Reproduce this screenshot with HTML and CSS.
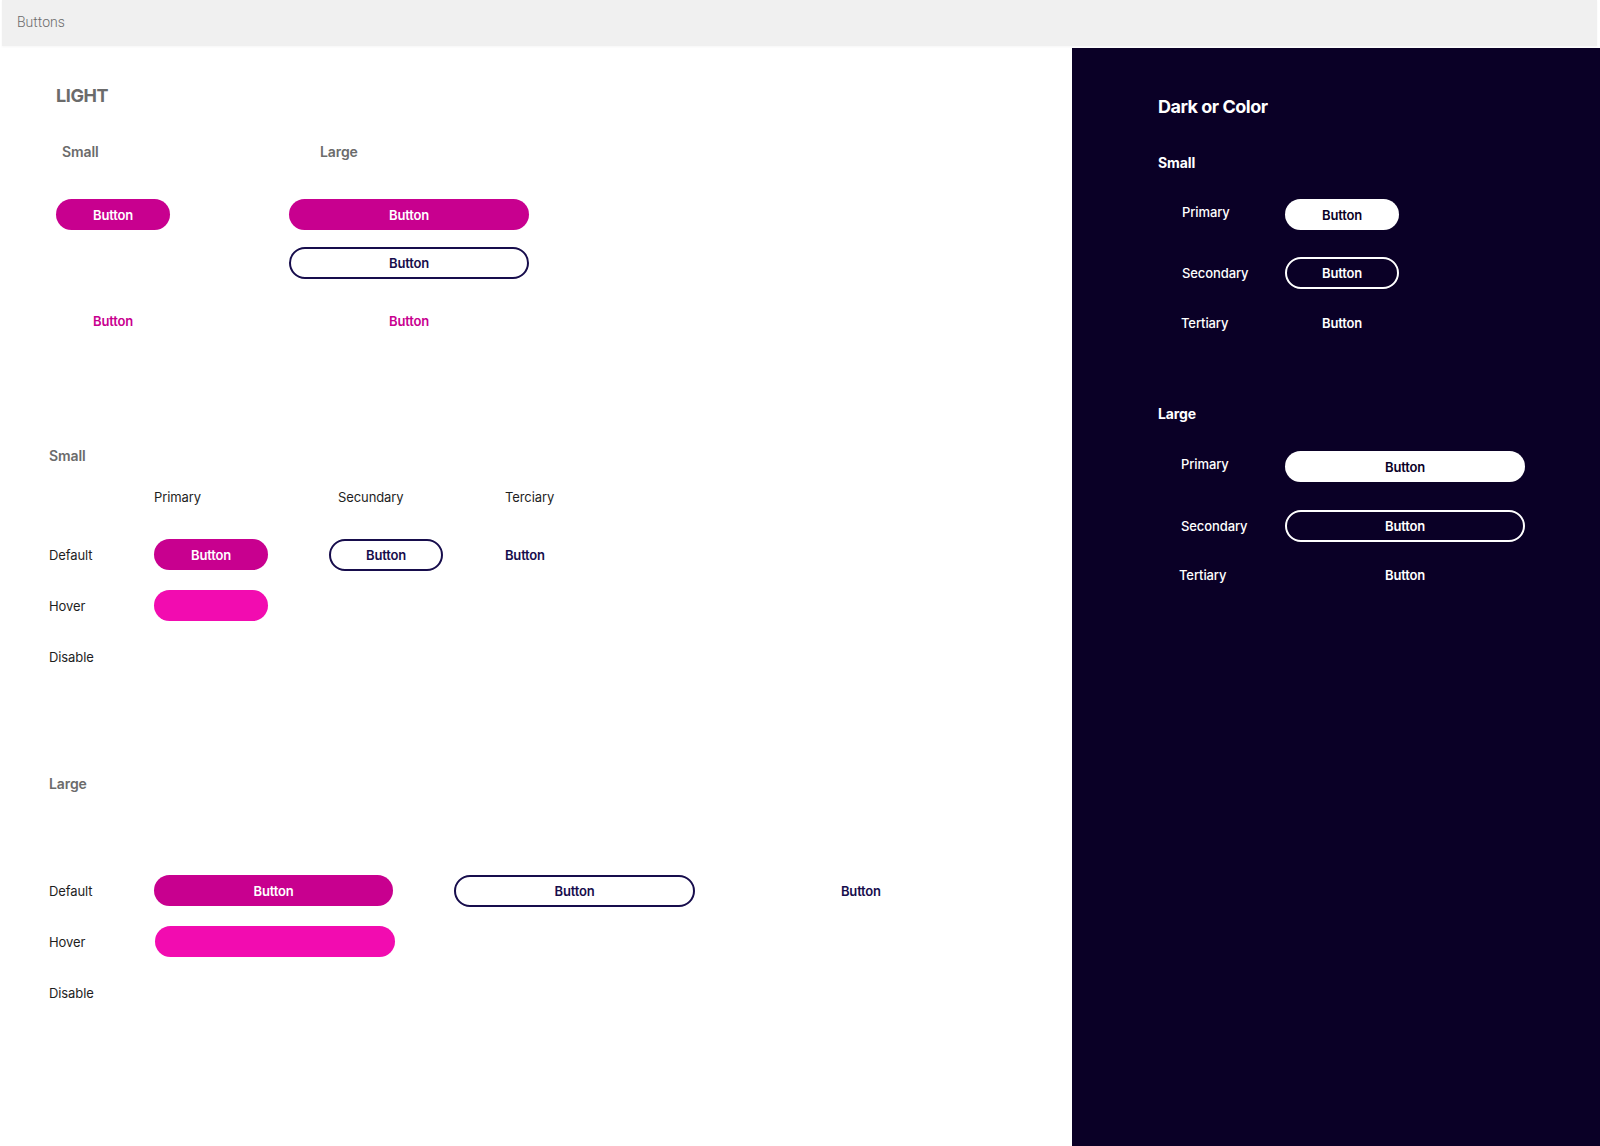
FILE: index.html
```html
<!DOCTYPE html>
<html lang="en">
<head>
    <meta charset="UTF-8">
    <meta name="viewport" content="width=device-width, initial-scale=1.0">
    <title>Buttons</title>
    <link rel="stylesheet" href="styles.css">
</head>
<body>
    <header class="topbar">Buttons</header>

    <main class="board">
        <section class="light">
            <h1 class="light-title">LIGHT</h1>

            <div class="overview">
                <div class="size-col size-col-small">
                    <h2 class="size-title">Small</h2>
                    <div class="ov-row"><a href="#" class="btn btn-primary btn-sm">Button</a></div>
                    <div class="ov-row"></div>
                    <div class="ov-row"><a href="#" class="btn btn-text btn-sm">Button</a></div>
                </div>
                <div class="size-col size-col-large">
                    <h2 class="size-title">Large</h2>
                    <div class="ov-row"><a href="#" class="btn btn-primary btn-lg">Button</a></div>
                    <div class="ov-row"><a href="#" class="btn btn-secondary btn-lg">Button</a></div>
                    <div class="ov-row"><a href="#" class="btn btn-text btn-lg">Button</a></div>
                </div>
            </div>

            <h2 class="state-title state-title-small">Small</h2>
            <div class="states states-small">
                <span></span>
                <span class="col-head">Primary</span>
                <span class="col-head col-head-2">Secundary</span>
                <span class="col-head">Terciary</span>

                <span class="state">Default</span>
                <a href="#" class="btn btn-primary btn-sm">Button</a>
                <a href="#" class="btn btn-secondary btn-sm">Button</a>
                <a href="#" class="btn btn-text btn-navy">Button</a>

                <span class="state">Hover</span>
                <span class="btn btn-hover btn-sm"></span>
                <span></span>
                <span></span>

                <span class="state">Disable</span>
                <span></span>
                <span></span>
                <span></span>
            </div>

            <h2 class="state-title state-title-large">Large</h2>
            <div class="states states-large">
                <span class="state">Default</span>
                <a href="#" class="btn btn-primary btn-lg">Button</a>
                <a href="#" class="btn btn-secondary btn-lg">Button</a>
                <a href="#" class="btn btn-text btn-navy">Button</a>

                <span class="state">Hover</span>
                <span class="btn btn-hover btn-lg btn-shift"></span>
                <span></span>
                <span></span>

                <span class="state">Disable</span>
                <span></span>
                <span></span>
                <span></span>
            </div>
        </section>

        <section class="dark">
            <h1 class="dark-title">Dark or Color</h1>

            <h2 class="dark-size">Small</h2>
            <div class="dark-list dark-list-small">
                <span class="dark-label dark-label-primary">Primary</span>
                <a href="#" class="btn btn-white btn-sm">Button</a>
                <span class="dark-label">Secondary</span>
                <a href="#" class="btn btn-ghost btn-sm">Button</a>
                <span class="dark-label dark-label-left">Tertiary</span>
                <a href="#" class="btn btn-text-white btn-sm">Button</a>
            </div>

            <h2 class="dark-size dark-size-large">Large</h2>
            <div class="dark-list dark-list-large">
                <span class="dark-label dark-label-left dark-label-primary">Primary</span>
                <a href="#" class="btn btn-white btn-lg">Button</a>
                <span class="dark-label dark-label-left">Secondary</span>
                <a href="#" class="btn btn-ghost btn-lg">Button</a>
                <span class="dark-label dark-label-lefter">Tertiary</span>
                <a href="#" class="btn btn-text-white btn-lg">Button</a>
            </div>
        </section>
    </main>
</body>
</html>
```

FILE: styles.css
```css
* {
    box-sizing: border-box;
}
body {
    margin: 0;
    font-family: Inter, "Noto Sans", sans-serif;
    background-color: #fff;
    color: #1e1e1e;
    letter-spacing: -0.1px;
}
h1, h2 {
    margin: 0;
}

.topbar {
    height: 46px;
    margin: 0 3px 0 2px;
    padding: 0 0 3px 15px;
    display: flex;
    align-items: center;
    background-color: #f0f0f0;
    box-shadow: 0 1px 2px rgba(0, 0, 0, 0.04);
    font-family: Roboto, "Liberation Sans", sans-serif;
    font-weight: 300;
    font-size: 14px;
    letter-spacing: 0;
    color: #6a6a6a;
}

.board {
    display: flex;
    margin-top: 2px;
    min-height: 1098px;
}

/* buttons */
.btn {
    display: flex;
    align-items: center;
    justify-content: center;
    height: 31px;
    border-radius: 16px;
    font-size: 13px;
    font-weight: 600;
    letter-spacing: -0.2px;
    text-decoration: none;
}
.btn-sm {
    width: 114px;
}
.btn-lg {
    width: 240px;
}
.btn-primary {
    background-color: #c8008f;
    color: #fff;
}
.btn-hover {
    background-color: #f20cb0;
}
.btn-secondary {
    border: 2px solid #170d4c;
    color: #170d4c;
    height: 32px;
}
.btn-text {
    color: #c8008f;
}
.btn-navy {
    color: #170d4c;
    justify-content: flex-start;
}
.btn-white {
    background-color: #fff;
    color: #0a0026;
}
.btn-ghost {
    border: 2px solid #fff;
    color: #fff;
    height: 32px;
}
.btn-text-white {
    color: #fff;
    height: 16px;
}

/* light side */
.light {
    width: 1072px;
    padding: 37px 0 0 49px;
}
.light-title {
    margin-left: 7px;
    font-size: 18px;
    font-weight: 700;
    line-height: 22px;
    letter-spacing: -0.4px;
    color: #6b6b6b;
}
.overview {
    display: flex;
    margin-top: 36px;
    margin-left: 7px;
}
.size-col-small {
    width: 233px;
}
.size-title,
.state-title {
    font-size: 14px;
    font-weight: 600;
    line-height: 18px;
    color: #6b6b6b;
}
.size-title {
    margin-bottom: 38px;
}
.size-col-small .size-title {
    padding-left: 6px;
}
.size-col-large .size-title {
    padding-left: 31px;
}
.ov-row {
    height: 48px;
}
.ov-row:last-child {
    margin-top: 10px;
}

.state-title-small {
    margin-top: 94px;
}
.state-title-large {
    margin-top: 93px;
}

.states {
    display: grid;
    align-items: center;
    font-size: 13px;
}
.states-small {
    grid-template-columns: 105px 175px 176px auto;
    grid-template-rows: 41px 51px 51px 51px;
    margin-top: 23px;
}
.col-head {
    align-self: start;
    line-height: 18px;
}
.col-head-2 {
    padding-left: 9px;
}
.states-large {
    grid-template-columns: 105px 300px 387px auto;
    grid-template-rows: 51px 51px 51px;
    margin-top: 72px;
}
.states-large .btn-primary {
    width: 239px;
}
.states-large .btn-secondary {
    width: 241px;
}
.btn-shift {
    margin-left: 1px;
}
.state {
    line-height: 18px;
}

/* dark side */
.dark {
    flex: 1;
    background-color: #0a0026;
    color: #fff;
    padding: 48px 0 0 86px;
}
.dark-title {
    font-size: 18px;
    font-weight: 700;
    line-height: 22px;
    letter-spacing: -0.5px;
}
.dark-size {
    font-size: 14px;
    font-weight: 700;
    line-height: 18px;
    margin-top: 36px;
}
.dark-size-large {
    margin-top: 74px;
}
.dark-list {
    display: grid;
    grid-template-columns: 127px auto;
    grid-template-rows: 31px 32px 16px;
    row-gap: 26px;
    align-items: center;
    margin-top: 27px;
    font-size: 13px;
    font-weight: 500;
}
.dark-list-small {
    row-gap: 26.5px;
}
.dark-list-large {
    grid-template-rows: 31px 32px 12px;
    row-gap: 27.5px;
    margin-top: 28px;
}
.dark-label {
    padding-left: 24px;
    line-height: 18px;
}
.dark-label-primary {
    margin-top: -5px;
}
.dark-label-left {
    padding-left: 23px;
}
.dark-label-lefter {
    padding-left: 21px;
}
```
